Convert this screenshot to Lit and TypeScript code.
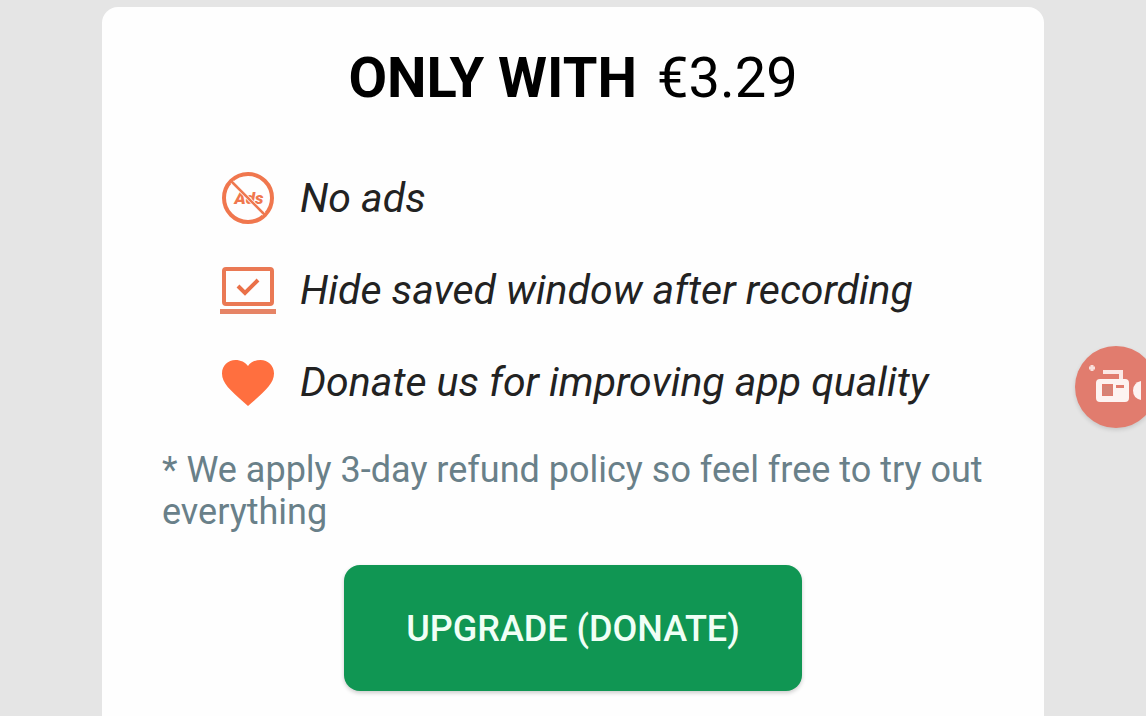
import { LitElement, html, css, svg } from "lit";
import { customElement } from "lit/decorators.js";

const noAds = svg`
  <circle cx="28" cy="28" r="24" fill="none" stroke="#f0774e" stroke-width="4"/>
  <text x="29" y="34" text-anchor="middle" font-family="Roboto, sans-serif" font-size="17" font-weight="900" fill="#f0774e">Ads</text>
  <path d="M12 12 44 44" stroke="#fff" stroke-width="4"/>
  <path d="M11 11 45 45" stroke="#ee784f" stroke-width="2.500"/>`;

const laptop = svg`
  <rect x="4" y="7" width="48" height="35" rx="2" fill="none" stroke="#ea7954" stroke-width="4"/>
  <path d="M0 47H56V52H0Z" fill="#e68466"/>
  <path d="M18 24 25 31 38 18" fill="none" stroke="#ea7048" stroke-width="4"/>`;

const heart = svg`
  <path d="M28 52 24 48.500C10 36 2 29 2 19.500 2 11.500 8 6 15.500 6 20.500 6 25.500 8.300 28 12 30.500 8.300 35.500 6 40.500 6 48 6 54 11.500 54 19.500 54 29 46 36 32 48.500Z" fill="#ff6f3f"/>`;

const features = [
  { icon: noAds, label: "No ads" },
  { icon: laptop, label: "Hide saved window after recording" },
  { icon: heart, label: "Donate us for improving app quality" },
];

@customElement("app-root")
export class AppRoot extends LitElement {
  static styles = css`
    :host {
      display: block;
      font-family: Roboto, "Liberation Sans", sans-serif;
    }
    .page {
      display: flex;
      min-height: 100vh;
      box-sizing: border-box;
      padding: 7px 102px 0;
      background: #e5e5e5;
      overflow: hidden;
    }
    .card {
      flex: 1;
      display: flex;
      flex-direction: column;
      align-items: center;
      box-sizing: border-box;
      padding: 37px 60px 24px;
      background: #fefefe;
      border-radius: 16px 16px 0 0;
      color: #000;
    }
    .title {
      display: flex;
      gap: 20px;
      margin: 0;
      font-size: 56px;
      line-height: 68px;
      font-weight: 700;
    }
    .price {
      font-weight: 400;
    }
    .features {
      align-self: stretch;
      display: flex;
      flex-direction: column;
      gap: 36px;
      list-style: none;
      margin: 58px 0 0;
      padding: 0 0 0 58px;
    }
    .feature {
      display: flex;
      align-items: center;
      gap: 24px;
      font-size: 41px;
      line-height: 56px;
      font-style: italic;
      color: #222;
    }
    .icon {
      flex: none;
      width: 56px;
      height: 56px;
    }
    .note {
      align-self: stretch;
      margin: 39px 0 32px;
      font-size: 36px;
      line-height: 42px;
      color: #698089;
    }
    .upgrade {
      padding: 43px 62px 41px;
      border: 0;
      border-radius: 16px;
      background: #109653;
      box-shadow: 0 2px 4px #0003;
      color: #f0fff6;
      font: 500 36px/42px Roboto, "Liberation Sans", sans-serif;
      cursor: pointer;
    }
    .record {
      position: fixed;
      top: 346px;
      right: -11px;
      width: 82px;
      height: 82px;
      padding: 0;
      border: 0;
      border-radius: 50%;
      background: #e17c6e;
      box-shadow: 0 2px 4px #0002;
      cursor: pointer;
    }
    .camera {
      display: block;
      width: 82px;
      height: 82px;
    }
  `;

  render() {
    return html`
      <main class="page">
        <section class="card">
          <h1 class="title"><span>ONLY WITH</span><span class="price">€3.29</span></h1>
          <ul class="features">
            ${features.map(
              (f) => html`<li class="feature">
                <svg class="icon" viewBox="0 0 56 56" aria-hidden="true">${f.icon}</svg>
                <span>${f.label}</span>
              </li>`
            )}
          </ul>
          <p class="note">* We apply 3-day refund policy so feel free to try out everything</p>
          <button class="upgrade" type="button">UPGRADE (DONATE)</button>
        </section>
        <button class="record" type="button" aria-label="Record screen">
          <svg class="camera" viewBox="0 0 82 82" aria-hidden="true">
            <path d="M17 19V25M14 22H20" stroke="#f9dfdb" stroke-width="3"/>
            <path d="M28 26H46V34" fill="none" stroke="#fbe9e6" stroke-width="4"/>
            <path fill-rule="evenodd" fill="#fdf3f1" d="M25 33H50Q54 33 54 37V52Q54 56 50 56H25Q21 56 21 52V37Q21 33 25 33ZM27 38V50H38V38ZM41 39V42H49V39Z"/>
            <rect x="28" y="40" width="9" height="9" fill="#d58376"/>
            <path d="M66 35V54Q58 52 58 44.500T66 35Z" fill="#fdf3f1"/>
          </svg>
        </button>
      </main>
    `;
  }
}
